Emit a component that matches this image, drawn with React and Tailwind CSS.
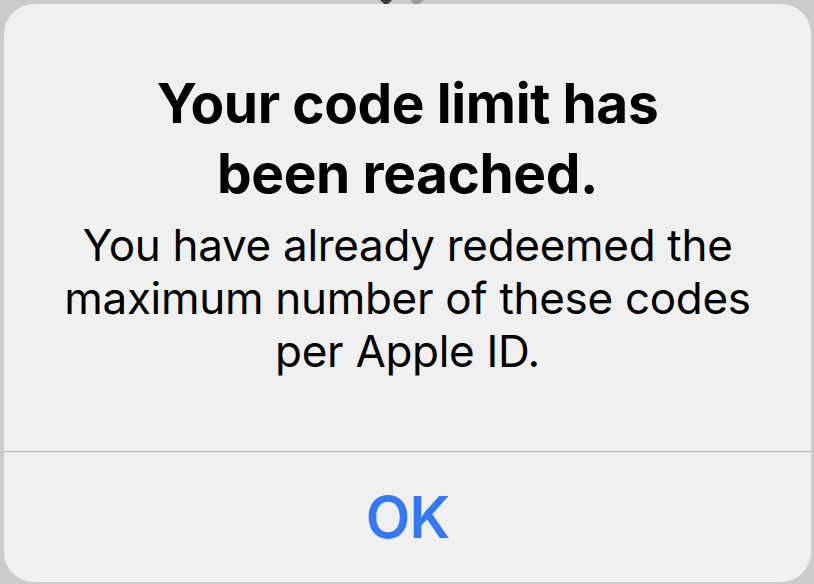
export default function App() {
  return (
    <div className="relative w-[814px] h-[584px] bg-[#cbcbcb] overflow-hidden" style={{ fontFamily: "Inter, 'Noto Sans', sans-serif" }}>
      {/* peek of the icon behind the sheet */}
      <svg className="absolute left-[372px] top-0" width="60" height="8" viewBox="0 0 60 8">
        <path d="M8 0 L20 0 L14 6 Z" fill="#3a3a3a" />
        <path d="M38 0 L52 0 L44 6 Z" fill="#9a9a9a" />
      </svg>

      <div className="absolute left-[4px] right-[3px] top-[4px] bottom-[2px] bg-[#f0f0f0] rounded-[30px] flex flex-col">
        <div className="flex flex-col items-center text-center text-black pt-[64px] px-2 h-[447px]">
          <h1 className="text-[55px] leading-[70px] font-bold tracking-[-0.4px] whitespace-nowrap">
            Your code limit has<br />been reached.
          </h1>
          <p className="text-[44px] leading-[53px] mt-[11px] tracking-[-0.3px] whitespace-nowrap">
            You have already redeemed the<br />maximum number of these codes<br />per Apple ID.
          </p>
        </div>
        <div className="h-px bg-[#b2b2b2]" />
        <div className="flex-1 flex items-center justify-center">
          <span className="text-[58px] font-semibold text-[#3478f6] tracking-[-1px]">OK</span>
        </div>
      </div>
    </div>
  );
}
